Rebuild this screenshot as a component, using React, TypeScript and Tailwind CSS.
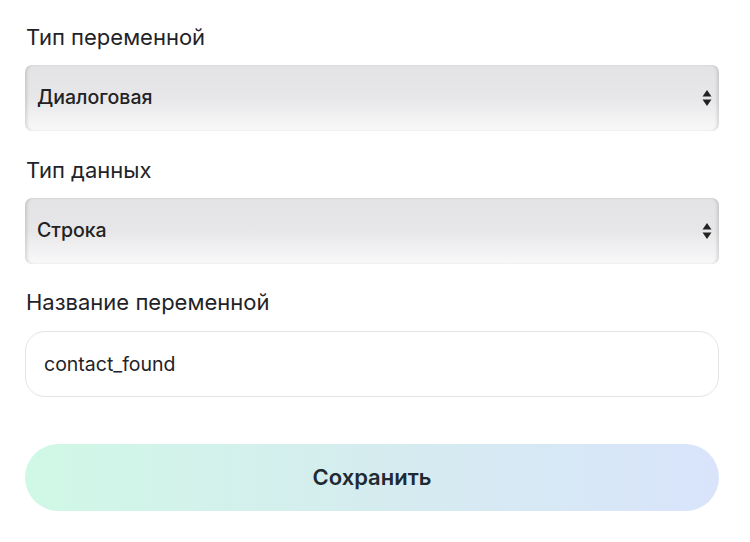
import React from 'react';

const SelectBox: React.FC<{ value: string }> = ({ value }) => (
  <div className="relative flex h-[66px] w-full items-center rounded-[7px] bg-gradient-to-b from-[#e3e3e5] via-[#e7e7e9] to-[#f9f9fa] px-3 shadow-[inset_3px_0_3px_-1px_rgba(0,0,0,0.12),inset_-3px_0_3px_-1px_rgba(0,0,0,0.12)]">
    <span className="text-[19.5px] font-medium text-[#222]">{value}</span>
    <svg className="absolute right-[7px] top-1/2 -translate-y-1/2" width="10" height="18" viewBox="0 0 10 18">
      <path d="M5 1 L9.5 7.5 H0.5 Z" fill="#222" />
      <path d="M5 17 L9.5 10.5 H0.5 Z" fill="#222" />
    </svg>
  </div>
);

const Label: React.FC<{ children: React.ReactNode }> = ({ children }) => (
  <div className="pl-px text-[22px] leading-[28px] text-[#1f2328]">{children}</div>
);

export default function App() {
  return (
    <div className="min-h-screen bg-white font-['Inter',sans-serif]">
      <div className="flex w-[719px] flex-col pl-[25px] pt-[23px]">
        <Label>Тип переменной</Label>
        <div className="mt-[14px]">
          <SelectBox value="Диалоговая" />
        </div>
        <div className="mt-[25px]">
          <Label>Тип данных</Label>
        </div>
        <div className="mt-[14px]">
          <SelectBox value="Строка" />
        </div>
        <div className="mt-[24px]">
          <Label>Название переменной</Label>
        </div>
        <input
          readOnly
          value="contact_found"
          className="mt-[15px] h-[66px] w-full rounded-[20px] border border-[#e3e4e8] bg-white px-[18px] text-[19.5px] text-[#1f2328] outline-none"
        />
        <button className="mt-[47px] h-[67px] w-full rounded-full bg-gradient-to-r from-[#d0f8e6] via-[#d5ecef] to-[#d9e4fb] text-[22px] font-semibold text-[#1f2a33]">
          Сохранить
        </button>
      </div>
    </div>
  );
}
